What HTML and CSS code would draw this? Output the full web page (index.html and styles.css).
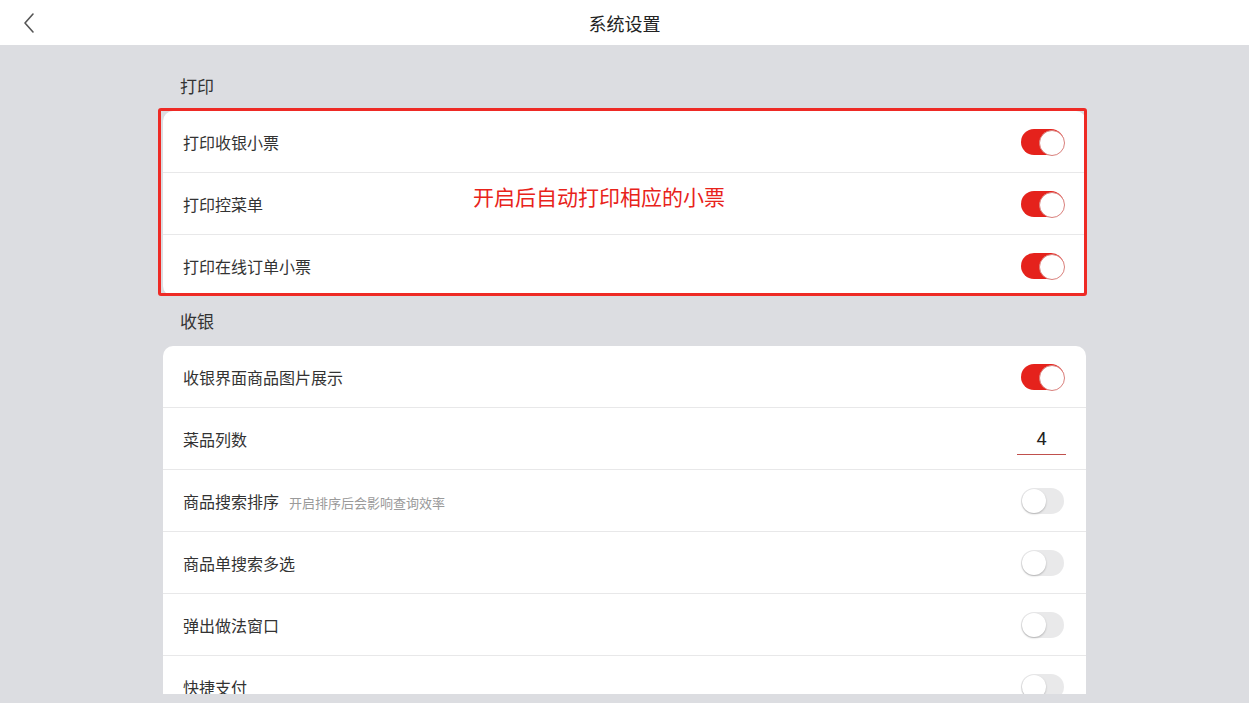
FILE: index.html
```html
<!DOCTYPE html>
<html lang="zh-CN">
<head>
<meta charset="utf-8">
<title>系统设置</title>
<link rel="stylesheet" href="styles.css">
</head>
<body>
<header class="topbar">
  <button class="back" aria-label="返回">
    <svg width="14" height="22" viewBox="0 0 14 22"><path d="M11 2 L3 11 L11 20" fill="none" stroke="#555" stroke-width="1.6" stroke-linecap="round" stroke-linejoin="round"/></svg>
  </button>
  <h1 class="title">系统设置</h1>
</header>
<main class="main">
  <div class="content">
    <div class="section-label">打印</div>
    <div class="card-wrap">
      <div class="card">
        <div class="row"><span class="label">打印收银小票</span><span class="toggle on"></span></div>
        <div class="row"><span class="label">打印控菜单</span><span class="toggle on"></span></div>
        <div class="row"><span class="label">打印在线订单小票</span><span class="toggle on"></span></div>
      </div>
      <div class="highlight"></div>
      <div class="note">开启后自动打印相应的小票</div>
    </div>
    <div class="section-label">收银</div>
    <div class="card">
      <div class="row"><span class="label">收银界面商品图片展示</span><span class="toggle on"></span></div>
      <div class="row"><span class="label">菜品列数</span><span class="num-input">4</span></div>
      <div class="row"><span class="label">商品搜索排序<span class="hint">开启排序后会影响查询效率</span></span><span class="toggle"></span></div>
      <div class="row"><span class="label">商品单搜索多选</span><span class="toggle"></span></div>
      <div class="row"><span class="label">弹出做法窗口</span><span class="toggle"></span></div>
      <div class="row"><span class="label">快捷支付</span><span class="toggle"></span></div>
    </div>
  </div>
</main>
</body>
</html>
```
FILE: styles.css
```css
* { box-sizing: border-box; }
html, body { margin: 0; padding: 0; }
body {
  width: 1249px;
  height: 703px;
  overflow: hidden;
  background: #dcdde1;
  font-family: "Noto Sans CJK SC", "Noto Sans", sans-serif;
  color: #333;
}
.topbar {
  position: relative;
  height: 45px;
  background: #fff;
  display: flex;
  align-items: center;
  justify-content: center;
}
.back {
  position: absolute;
  left: 18px;
  top: 11px;
  width: 22px;
  height: 24px;
  padding: 0 0 0 4px;
  border: 0;
  background: none;
  display: flex;
  align-items: center;
}
.title {
  margin: 0;
  font-size: 18px;
  font-weight: 400;
  color: #222;
  line-height: 24px;
}
.main {
  height: 649px;
  overflow: hidden;
}
.content {
  width: 923px;
  margin: 0 auto;
  padding-top: 16px;
}
.section-label {
  padding: 13px 17px 13px;
  font-size: 17px;
  line-height: 24px;
  color: #333;
}
.card-wrap {
  position: relative;
}
.card {
  background: #fff;
  border-radius: 10px;
  overflow: hidden;
}
.row {
  height: 62px;
  padding: 0 22px 0 20px;
  display: flex;
  align-items: center;
  justify-content: space-between;
  border-bottom: 1px solid #e8e8e9;
}
.card-wrap .row:last-child { border-bottom: 0; height: 61px; }
.label {
  font-size: 16px;
  color: #333;
  display: flex;
  align-items: baseline;
}
.hint {
  margin-left: 10px;
  font-size: 13px;
  color: #9a9a9a;
}
.toggle {
  position: relative;
  width: 43px;
  height: 26px;
  border-radius: 13px;
  background: #e9e9ea;
  flex: none;
}
.toggle::after {
  content: "";
  position: absolute;
  top: 1px;
  left: 1px;
  width: 24px;
  height: 24px;
  border-radius: 50%;
  background: #fff;
  box-shadow: 0 1px 2px rgba(0,0,0,0.25);
}
.toggle.on { background: #e5221c; }
.toggle.on::after {
  left: 18px;
  box-shadow: none;
  border: 1px solid #d9807c;
}
.num-input {
  width: 49px;
  margin-right: -2px;
  margin-top: 4px;
  padding-bottom: 3px;
  text-align: center;
  font-family: "Roboto", "Noto Sans", sans-serif;
  font-size: 18px;
  line-height: 24px;
  color: #222;
  border-bottom: 1px solid #c0504d;
}
.highlight {
  position: absolute;
  left: -5px;
  top: -3px;
  width: 929px;
  height: 188px;
  border: 3px solid #ee2a25;
  border-radius: 3px;
  pointer-events: none;
}
.note {
  position: absolute;
  left: 310px;
  top: 71px;
  font-size: 21px;
  line-height: 28px;
  color: #e8231b;
}
```
